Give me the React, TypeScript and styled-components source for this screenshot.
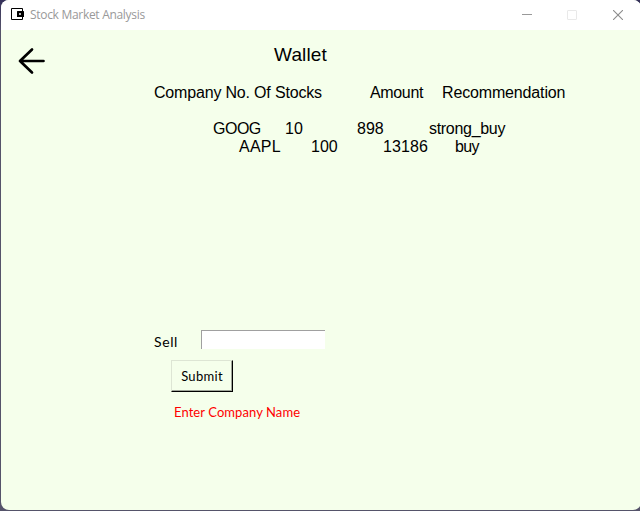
import React from "react";
import styled, { createGlobalStyle } from "styled-components";

const GlobalStyle = createGlobalStyle`
  * { box-sizing: border-box; }
  body { margin: 0; background: #504d63; overflow: hidden; }
`;

const Frame = styled.div`
  width: 640px;
  height: 511px;
  padding: 0 0 1px 1px;
  overflow: hidden;
  background: linear-gradient(#35315a, #55536a 30px);
`;

const Window = styled.div`
  width: 640px;
  height: 510px;
  border-radius: 8px;
  overflow: hidden;
  background: #f5ffeb;
  display: flex;
  flex-direction: column;
`;

const TitleBar = styled.header`
  height: 30px;
  flex: none;
  background: #fff;
  display: flex;
  align-items: center;
  padding-left: 9px;
`;

const Caption = styled.span`
  flex: 1;
  margin-left: 6px;
  font: 12px/16px "Open Sans", sans-serif;
  letter-spacing: -0.3px;
  color: #999;
`;

const WindowControl = styled.button`
  width: 45px;
  height: 28px;
  padding: 0;
  border: 0;
  background: none;
  display: flex;
  align-items: center;
  justify-content: center;
`;

const Controls = styled.div`
  display: flex;
  margin-right: 1px;
`;

const Content = styled.main`
  flex: 1;
  display: flex;
  flex-direction: column;
  align-items: flex-start;
  font-family: "Liberation Sans", Arial, sans-serif;
  font-size: 16px;
  line-height: 18px;
  color: #000;
`;

const Heading = styled.div`
  height: 54px;
  display: flex;
  padding-top: 14px;
`;

const BackButton = styled.button`
  width: 32px;
  height: 32px;
  margin: 1px 0 0 14px;
  padding: 0;
  border: 0;
  background: none;
`;

const Title = styled.h1`
  margin: 0 0 0 227px;
  font-size: 19px;
  font-weight: 400;
  line-height: 22px;
  letter-spacing: 0.15px;
`;

const Row = styled.div<{ $indent: number; $cols: string }>`
  display: grid;
  grid-template-columns: ${(p) => p.$cols};
  margin-left: ${(p) => p.$indent}px;
  white-space: nowrap;
`;

const Cell = styled.span<{ $tracking?: number }>`
  letter-spacing: ${(p) => p.$tracking ?? 0}px;
`;

const Holdings = styled.div`
  margin-top: 18px;
`;

const SellForm = styled.form`
  margin: 174px 0 0 153px;
  font-family: Lato, sans-serif;
  font-size: 13px;
`;

const Field = styled.label`
  display: flex;
  height: 19px;
`;

const FieldLabel = styled.span`
  width: 47px;
  padding-top: 3px;
  font-size: 14px;
  letter-spacing: 0.6px;
`;

const Input = styled.input`
  width: 124px;
  height: 19px;
  padding: 1px 3px;
  border: solid #a0a0a0;
  border-width: 1px 0 0 1px;
  border-radius: 0;
  outline: 0;
  background: #fff;
`;

const Submit = styled.button`
  display: block;
  width: 62px;
  height: 32px;
  margin: 11px 0 0 17px;
  padding: 0;
  border: 1px solid;
  border-color: #dde5d4 #000 #000 #dde5d4;
  box-shadow: inset -1px -1px #a0a69a;
  background: #f5ffeb;
  color: #000;
  font: 13px/18px Lato, sans-serif;
  letter-spacing: 0.3px;
`;

const Message = styled.p`
  margin: 11px 0 0 20px;
  color: #f00;
  letter-spacing: 0.08px;
  white-space: nowrap;
`;

const WalletIcon = () => (
  <svg width="14" height="14" viewBox="0 0 14 14" fill="none">
    <path d="M12.5 4V.5H1.5v11h11V9" stroke="#000" strokeLinejoin="round" />
    <rect x="7" y="3" width="7" height="6" rx="0.5" fill="#000" />
    <rect x="9" y="5" width="2" height="2" fill="#bbb" />
  </svg>
);

const BackIcon = () => (
  <svg width="32" height="32" viewBox="0 0 32 32" fill="none">
    <path d="M28.5 16H5M17 4.5L5 16 17 27.5" stroke="#000" strokeWidth="2.7" strokeLinecap="round" strokeLinejoin="round" />
  </svg>
);

export default function App() {
  return (
    <>
      <GlobalStyle />
      <Frame>
        <Window>
          <TitleBar>
            <WalletIcon />
            <Caption>Stock Market Analysis</Caption>
            <Controls>
              <WindowControl aria-label="Minimize">
                <svg width="12" height="10"><path d="M0 4.5h10" stroke="#999" /></svg>
              </WindowControl>
              <WindowControl aria-label="Maximize" disabled>
                <svg width="12" height="10"><rect x=".5" y=".5" width="9" height="9" rx=".5" fill="none" stroke="#e9e9e9" /></svg>
              </WindowControl>
              <WindowControl aria-label="Close">
                <svg width="10" height="10"><path d="M0 0l10 10M10 0L0 10" stroke="#8c8c8c" strokeWidth="1.1" /></svg>
              </WindowControl>
            </Controls>
          </TitleBar>
          <Content>
            <Heading>
              <BackButton aria-label="Back"><BackIcon /></BackButton>
              <Title>Wallet</Title>
            </Heading>
            <Row $indent={153} $cols="216px 72px auto">
              <Cell $tracking={-0.18}>Company No. Of Stocks</Cell>
              <Cell $tracking={-0.35}>Amount</Cell>
              <Cell $tracking={-0.15}>Recommendation</Cell>
            </Row>
            <Holdings>
              <Row $indent={212} $cols="72px 72px 72px auto">
                <Cell $tracking={-0.5}>GOOG</Cell>
                <Cell>10</Cell>
                <Cell>898</Cell>
                <Cell $tracking={-0.3}>strong_buy</Cell>
              </Row>
              <Row $indent={238} $cols="72px 72px 72px auto">
                <Cell $tracking={0.25}>AAPL</Cell>
                <Cell>100</Cell>
                <Cell $tracking={0.1}>13186</Cell>
                <Cell $tracking={-0.6}>buy</Cell>
              </Row>
            </Holdings>
            <SellForm onSubmit={(e) => e.preventDefault()}>
              <Field>
                <FieldLabel>Sell</FieldLabel>
                <Input aria-label="Company name" />
              </Field>
              <Submit type="submit">Submit</Submit>
              <Message>Enter Company Name</Message>
            </SellForm>
          </Content>
        </Window>
      </Frame>
    </>
  );
}
